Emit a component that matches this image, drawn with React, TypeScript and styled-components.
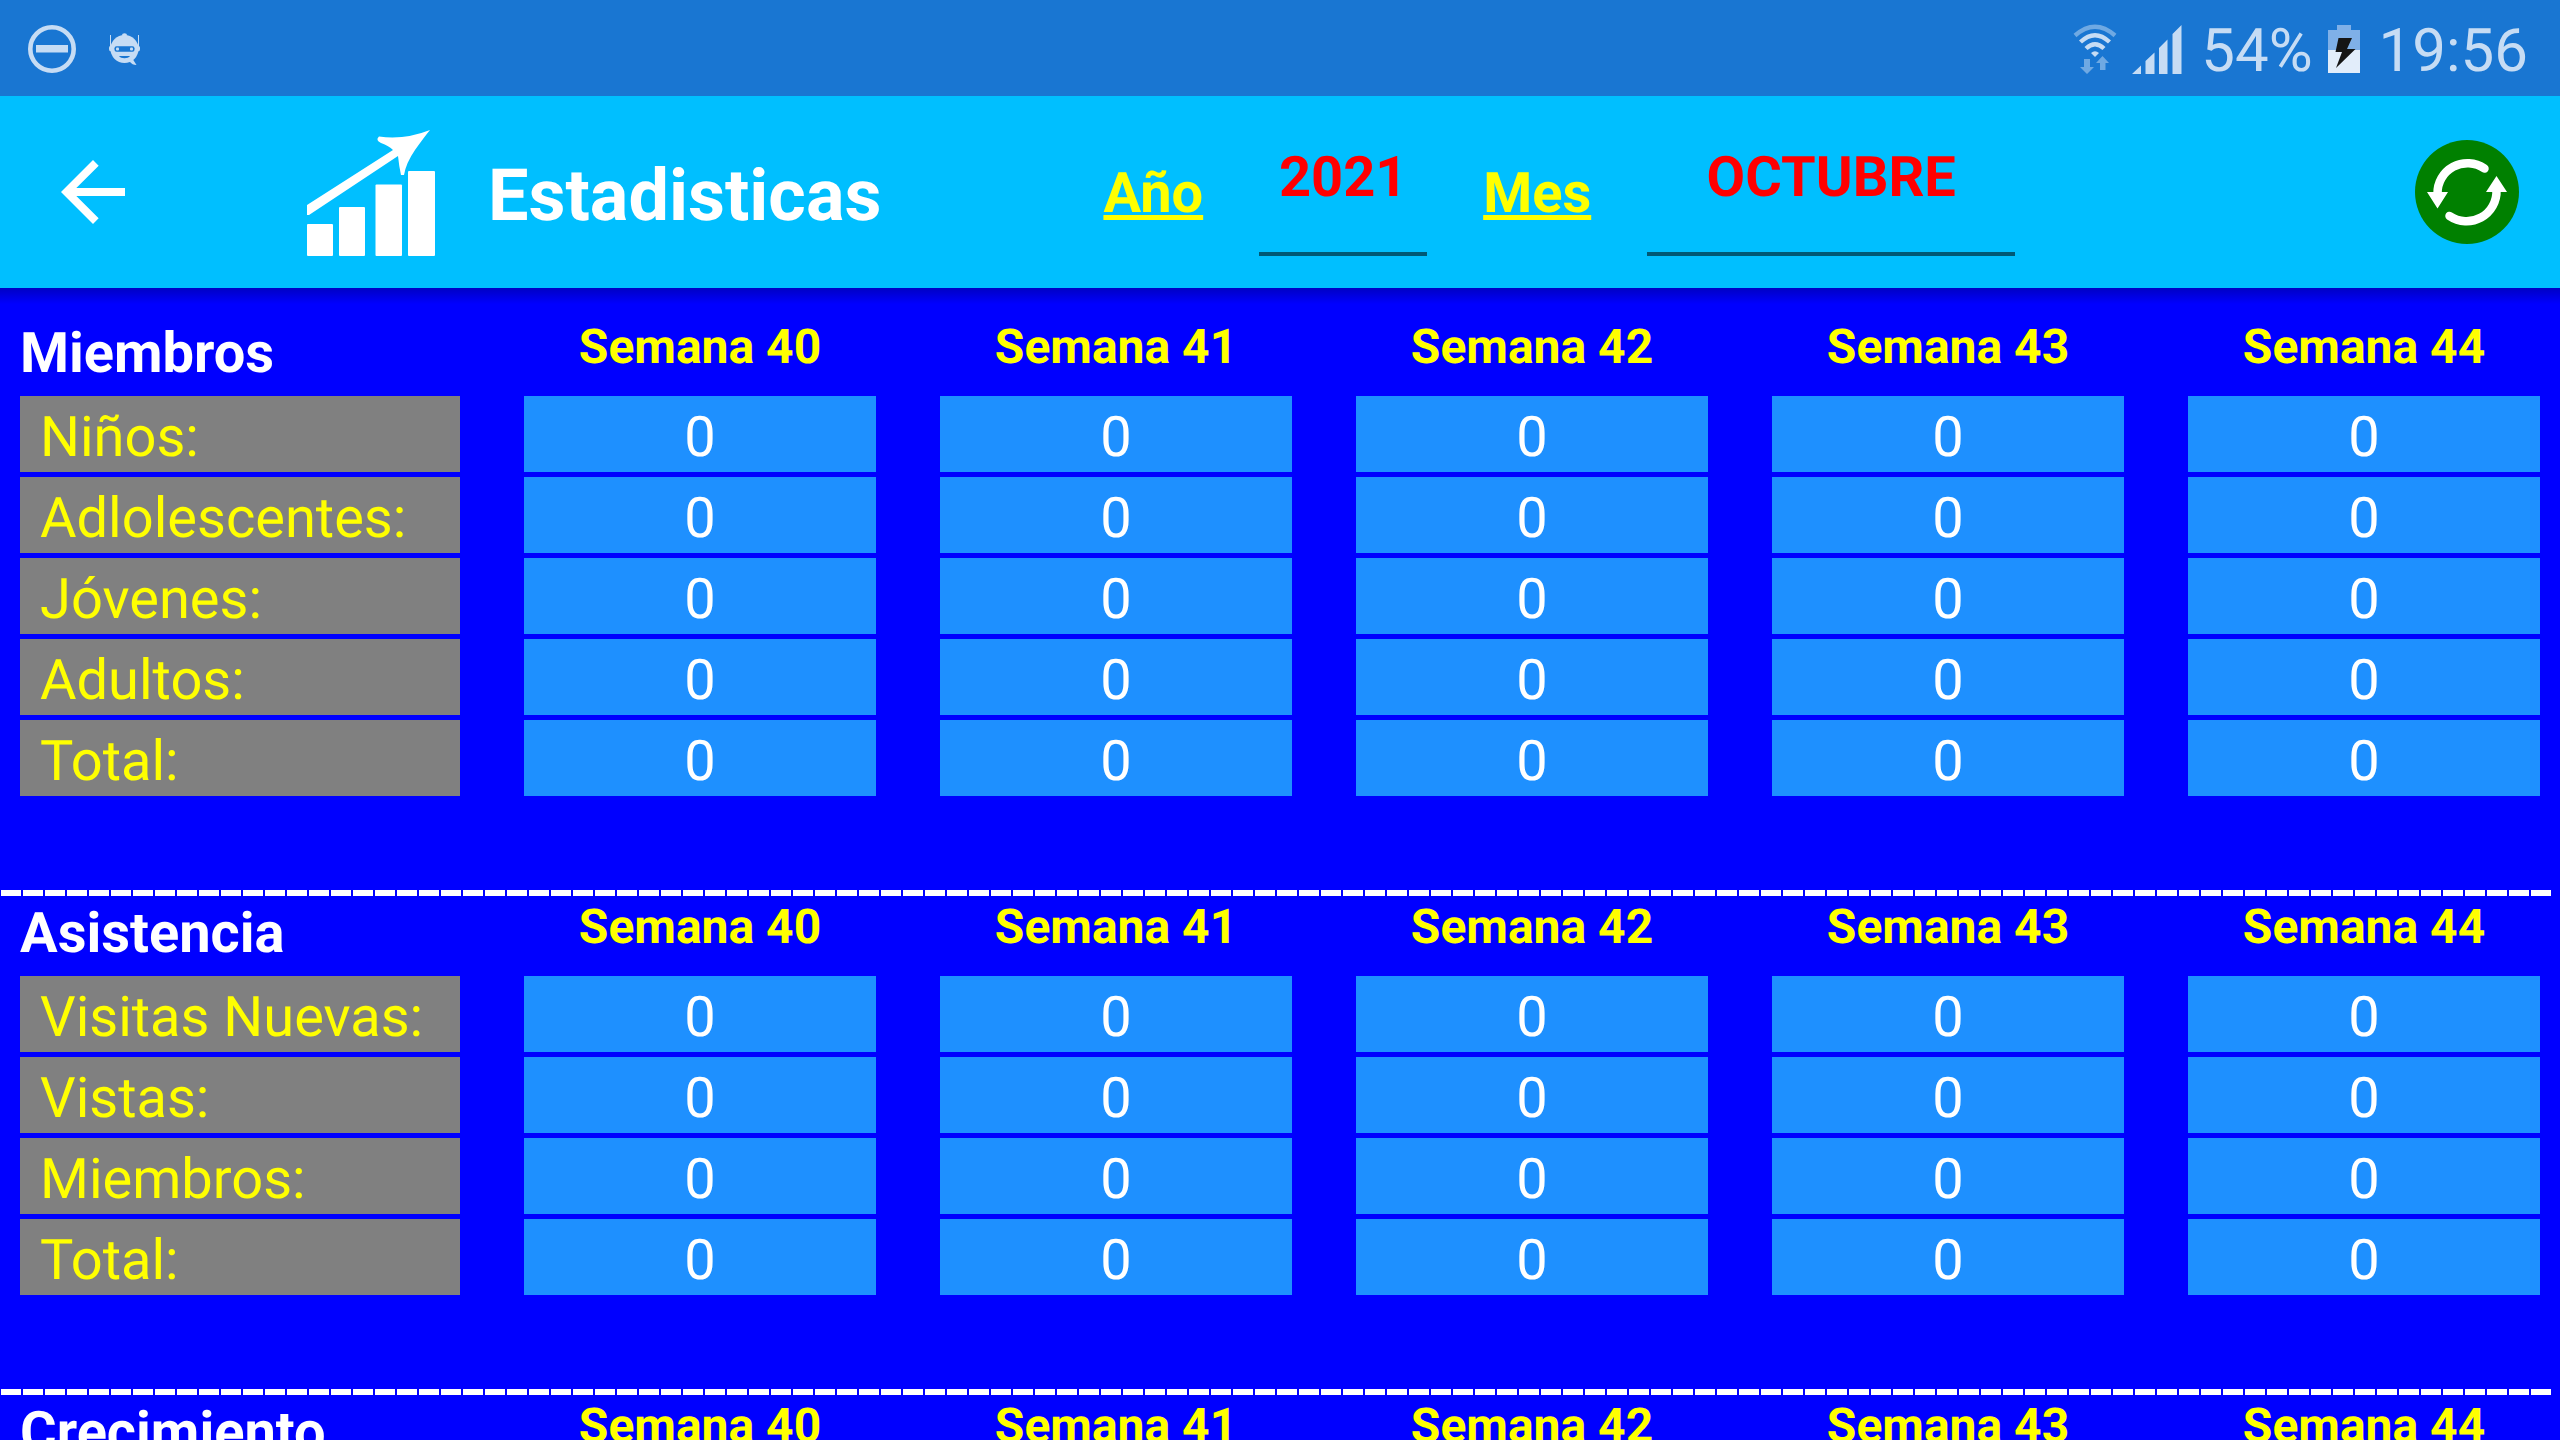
import React from "react";
import styled, { createGlobalStyle } from "styled-components";

const GlobalStyle = createGlobalStyle`
  *, *::before, *::after { box-sizing: border-box; }
  html { background: #0000ff; }
  body {
    margin: 0;
    height: 100vh;
    overflow: hidden;
    font-family: Roboto, "Liberation Sans", sans-serif;
    text-rendering: geometricPrecision;
  }
`;

const Screen = styled.div`
  display: flex;
  flex-direction: column;
  height: 100vh;
  overflow: hidden;
  background: #0000ff;
`;

const StatusBar = styled.div`
  display: flex;
  flex: none;
  align-items: center;
  justify-content: space-between;
  height: 96px;
  padding: 2px 32px 0 28px;
  background: #1976d2;
  color: #c6dcf4;
`;

const StatusGroup = styled.div<{ $gap: number }>`
  display: flex;
  align-items: center;
  gap: ${(p) => p.$gap}px;
`;

const StatusText = styled.span`
  padding: 4px 0 0 4px;
  font-size: 60px;
  line-height: 72px;
`;

const Toolbar = styled.header`
  display: flex;
  flex: none;
  align-items: center;
  height: 192px;
  padding: 0 41px 0 45px;
  background: #00bfff;
`;

const IconButton = styled.button`
  display: flex;
  flex: none;
  padding: 0;
  border: 0;
  background: none;
  cursor: pointer;
`;

const Brand = styled.div`
  display: flex;
  align-items: center;
  gap: 53px;
  margin-left: 166px;
`;

const Title = styled.h1`
  margin: 0;
  padding-top: 8px;
  color: #ffffff;
  font-size: 72px;
  font-weight: 700;
  line-height: 84px;
`;

const Filters = styled.div`
  display: flex;
  flex: 1;
  align-items: center;
  gap: 56px;
  margin-left: 222px;
`;

const FieldLabel = styled.label`
  padding-top: 2px;
  color: #ffff00;
  font-size: 56px;
  font-weight: 700;
  line-height: 66px;
  text-decoration: underline;
`;

const Field = styled.input<{ $width: number }>`
  width: ${(p) => p.$width}px;
  height: 112px;
  margin-top: 16px;
  padding: 0 0 42px;
  border: 0;
  border-bottom: 4px solid #005875;
  border-radius: 0;
  outline: 0;
  background: none;
  color: #ff0000;
  font: 700 56px/66px Roboto, "Liberation Sans", sans-serif;
  text-align: center;
  text-rendering: geometricPrecision;
`;

const Content = styled.main`
  flex: 1;
  min-height: 0;
  overflow: hidden;
  padding-top: 28px;
  background: linear-gradient(#0000c4, #0000ff 16px);
`;

const Section = styled.section`
  padding-bottom: 94px;
`;

const Divider = styled.hr`
  height: 6px;
  margin: 0 9px 0 1px;
  border: 0;
  background: repeating-linear-gradient(
    90deg,
    #ffffff 0 20px,
    transparent 20px 22px
  );
`;

const StatsTable = styled.table`
  display: block;
  padding: 0 20px;
`;

const HeadGroup = styled.thead`
  display: block;
`;

const BodyGroup = styled.tbody`
  display: grid;
  row-gap: 5px;
`;

const Row = styled.tr`
  display: grid;
  grid-template-columns: 5fr repeat(5, 4fr);
  column-gap: 64px;
`;

const SectionTitle = styled.th`
  padding: 4px 0 10px;
  color: #ffffff;
  font-size: 56px;
  font-weight: 700;
  line-height: 66px;
  text-align: left;
`;

const WeekTitle = styled.th`
  padding: 3px 0 0;
  color: #ffff00;
  font-size: 48px;
  font-weight: 700;
  line-height: 56px;
  text-align: center;
`;

const RowLabel = styled.th`
  padding: 8px 20px 2px;
  background: #808080;
  color: #ffff00;
  font-size: 56px;
  font-weight: 400;
  line-height: 66px;
  text-align: left;
  white-space: nowrap;
`;

const Value = styled.td`
  padding: 8px 0 2px;
  background: #1e90ff;
  color: #ffffff;
  font-size: 56px;
  line-height: 66px;
  text-align: center;
`;

const weeks = [40, 41, 42, 43, 44];

const sections = [
  {
    title: "Miembros",
    rows: ["Niños:", "Adlolescentes:", "Jóvenes:", "Adultos:", "Total:"],
  },
  {
    title: "Asistencia",
    rows: ["Visitas Nuevas:", "Vistas:", "Miembros:", "Total:"],
  },
  { title: "Crecimiento", rows: [] },
];

const DoNotDisturbIcon = () => (
  <svg width="48" height="48" viewBox="0 0 48 48" aria-hidden="true">
    <circle cx="24" cy="24" r="21.7" fill="none" stroke="currentColor" strokeWidth="4.6" />
    <rect x="8" y="20" width="32" height="7.5" fill="currentColor" />
  </svg>
);

const RobotIcon = () => (
  <svg width="32" height="32" viewBox="0 0 32 32" aria-hidden="true">
    <g fill="currentColor">
      <rect x="1" y="2" width="1" height="13" />
      <rect x="29" y="2" width="1" height="13" />
      <ellipse cx="15.5" cy="2" rx="2.5" ry="1.8" />
      <rect x="0" y="12.5" width="31" height="6" rx="2.5" />
      <circle cx="15.5" cy="16" r="14" />
      <path d="M18 28l6-1.5 3.5 5.5c-3 0-5-1-7-3.5z" />
    </g>
    <rect x="5.5" y="13.2" width="20" height="5.6" rx="2" fill="#1976d2" />
    <rect x="7" y="14.5" width="3" height="3" rx="1" fill="currentColor" />
    <rect x="21" y="14.5" width="3" height="3" rx="1" fill="currentColor" />
    <path d="M10 23h11c-2 3-9 3-11 0z" fill="#1976d2" />
  </svg>
);

const WifiIcon = () => (
  <svg width="44" height="50" viewBox="0 0 44 50" aria-hidden="true">
    <g fill="none" stroke="currentColor" strokeWidth="4.4">
      <path d="M2 11.5Q22-6 42 11.5" opacity="0.5" />
      <path d="M7.5 18Q22 4.5 36.5 18" />
      <path d="M13 24.5Q22 16 31 24.5" />
    </g>
    <path d="M18 29q4-3.5 8 0l-4 4z" fill="currentColor" />
    <path
      d="M11 35h6v8h4l-7 7-7-7h4zM27 46v-7h-4l6.5-7 6.5 7h-3.5v7z"
      fill="currentColor"
      opacity="0.5"
    />
  </svg>
);

const SignalIcon = () => (
  <svg width="50" height="49" viewBox="0 0 50 49" aria-hidden="true">
    <path
      d="M0 49l9-8.5V49zM13.5 49V36l9-8.5V49zM27 49V23l8.5-8.5V49zM40.5 49V9L49.5 0v49z"
      fill="currentColor"
    />
  </svg>
);

const BatteryIcon = () => (
  <svg width="32" height="48" viewBox="0 0 32 48" aria-hidden="true">
    <path d="M9 0h14v5h9v20H0V5h9z" fill="#7fb0e8" />
    <rect y="25" width="32" height="23" fill="#e2edfa" />
    <path d="M10.5 13H24l-5 11h8.5L8 43l6-16H7.500z" fill="#151515" />
  </svg>
);

const BackIcon = () => (
  <svg width="96" height="96" viewBox="0 0 24 24" aria-hidden="true">
    <path
      d="M20 11H7.83l5.59-5.59L12 4l-8 8 8 8 1.41-1.41L7.83 13H20v-2z"
      fill="#ffffff"
    />
  </svg>
);

const ChartIcon = () => (
  <svg width="128" height="128" viewBox="0 -2 128 128" aria-hidden="true">
    <g fill="#ffffff">
      <rect x="0" y="94" width="26" height="32" rx="1" />
      <rect x="32" y="77" width="26" height="49" rx="1" />
      <rect x="68.5" y="54.5" width="26.5" height="71.5" rx="1" />
      <rect x="101" y="41" width="27" height="85" rx="1" />
      <path d="M0 75L86 20q-4-4-12-7-6-3-2-6.500Q98 10 123 0q-5 6-15 20-9 13-11 25h-3q-2-9-3-19L2 85H0z" />
    </g>
  </svg>
);

const RefreshIcon = () => (
  <svg width="104" height="104" viewBox="0 0 104 104" aria-hidden="true">
    <circle cx="52" cy="52" r="52" fill="#008000" />
    <g fill="none" stroke="#ffffff" strokeWidth="8.5" strokeLinecap="round">
      <path d="M22.5 54A30 30 0 0 1 69.5 28.5" />
      <path d="M81.5 50A30 30 0 0 1 34.5 76" />
    </g>
    <path d="M12 52h21L22.5 68.5zM71 52h21L81.5 36z" fill="#ffffff" />
  </svg>
);

const StatsSection = ({ title, rows }: { title: string; rows: string[] }) => (
  <Section>
    <StatsTable>
      <HeadGroup>
        <Row>
          <SectionTitle scope="col">{title}</SectionTitle>
          {weeks.map((week) => (
            <WeekTitle key={week} scope="col">
              Semana {week}
            </WeekTitle>
          ))}
        </Row>
      </HeadGroup>
      <BodyGroup>
        {rows.map((label) => (
          <Row key={label}>
            <RowLabel scope="row">{label}</RowLabel>
            {weeks.map((week) => (
              <Value key={week}>0</Value>
            ))}
          </Row>
        ))}
      </BodyGroup>
    </StatsTable>
  </Section>
);

export default function App() {
  return (
    <Screen>
      <GlobalStyle />
      <StatusBar>
        <StatusGroup $gap={33}>
          <DoNotDisturbIcon />
          <RobotIcon />
        </StatusGroup>
        <StatusGroup $gap={15}>
          <WifiIcon />
          <SignalIcon />
          <StatusText>54%</StatusText>
          <BatteryIcon />
          <StatusText>19:56</StatusText>
        </StatusGroup>
      </StatusBar>
      <Toolbar>
        <IconButton type="button" aria-label="Volver">
          <BackIcon />
        </IconButton>
        <Brand>
          <ChartIcon />
          <Title>Estadisticas</Title>
        </Brand>
        <Filters>
          <FieldLabel htmlFor="year">Año</FieldLabel>
          <Field id="year" $width={168} defaultValue="2021" />
          <FieldLabel htmlFor="month">Mes</FieldLabel>
          <Field id="month" $width={368} defaultValue="OCTUBRE" />
        </Filters>
        <IconButton type="button" aria-label="Actualizar">
          <RefreshIcon />
        </IconButton>
      </Toolbar>
      <Content>
        {sections.map((section, index) => (
          <React.Fragment key={section.title}>
            {index > 0 && <Divider />}
            <StatsSection title={section.title} rows={section.rows} />
          </React.Fragment>
        ))}
      </Content>
    </Screen>
  );
}
